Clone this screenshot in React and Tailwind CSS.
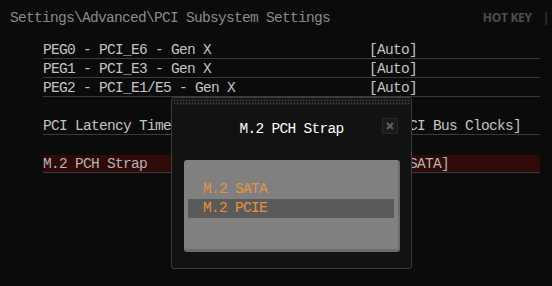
import React from "react";

const mono = { fontFamily: '"Liberation Mono", "DejaVu Sans Mono", monospace' };

function Row({ label, value, highlight }) {
  return (
    <div className="h-[19px] border-b border-[#3a3a3a] flex">
      <div
        className={`flex-1 flex h-[17px] mt-[1px] pt-[1px] leading-[16px] ${highlight ? "bg-[#300909] text-[#b4b4b4]" : "text-[#c4c4c4]"}`}
      >
        <span className="w-[326px]">{label}</span>
        <span>{value}</span>
      </div>
    </div>
  );
}

export default function App() {
  return (
    <div
      className="relative w-[552px] h-[286px] bg-[#0b0b0b] overflow-hidden text-[14.5px] tracking-[-0.7px]"
      style={mono}
    >
      <div className="flex justify-between items-start pt-[10px] pl-[10px] pr-[3px] h-[40px]">
        <div className="text-[#8a8a8a] leading-[16px]">Settings\Advanced\PCI Subsystem Settings</div>
        <div className="flex items-center gap-[11px] pt-[1px] text-[#4e4e4e] text-[12px] font-bold leading-[14px] tracking-[-0.3px]" style={{ fontFamily: '"Open Sans", "Liberation Sans", sans-serif' }}>
          <span>HOT KEY</span>
          <span className="font-normal">|</span>
        </div>
      </div>
      <div className="ml-[43px] mr-[12px]">
        <Row label="PEG0 - PCI_E6 - Gen X" value="[Auto]" />
        <Row label="PEG1 - PCI_E3 - Gen X" value="[Auto]" />
        <Row label="PEG2 - PCI_E1/E5 - Gen X" value="[Auto]" />
        <div className="h-[19px]" />
        <Row label="PCI Latency Timer" value="[32 PCI Bus Clocks]" />
        <div className="h-[19px]" />
        <Row label="M.2 PCH Strap" value="[M.2 SATA]" highlight />
      </div>

      <div className="absolute left-[171px] top-[97px] w-[241px] h-[172px] border border-[#3c3c3c] rounded-[3px] bg-[#121212] flex flex-col">
        <div className="mx-[1px] mt-[1px] h-[6px] bg-[#1c1c1c] bg-[radial-gradient(circle,#4a4a4a_0.8px,transparent_0.9px)] bg-size-[3px_3px]" />
        <div className="relative h-[55px] flex justify-center">
          <span className="text-white pt-[16px] leading-[16px]">M.2 PCH Strap</span>
          <div className="absolute left-[210px] top-[13px] w-[16px] h-[16px] bg-[#1a1a1a] border border-[#262626] flex items-center justify-center">
            <svg width="10" height="10" viewBox="0 0 10 10">
              <path d="M2 2 L8 8 M8 2 L2 8" stroke="#5e5e5e" strokeWidth="2.2" />
            </svg>
          </div>
        </div>
        <div className="ml-[12px] w-[216px] h-[92px] rounded-[3px] bg-[#808080] border-r-[2px] border-b-[3px] border-[#6c6c6c] pt-[20px] pl-[4px] pr-[4px]">
          <div className="h-[19px] pl-[15px] pt-[1px] leading-[16px] text-[#e8923e]">M.2 SATA</div>
          <div className="h-[19px] pl-[15px] pt-[1px] leading-[16px] text-[#e8923e] bg-[#5a5a5a]">M.2 PCIE</div>
        </div>
      </div>
    </div>
  );
}
